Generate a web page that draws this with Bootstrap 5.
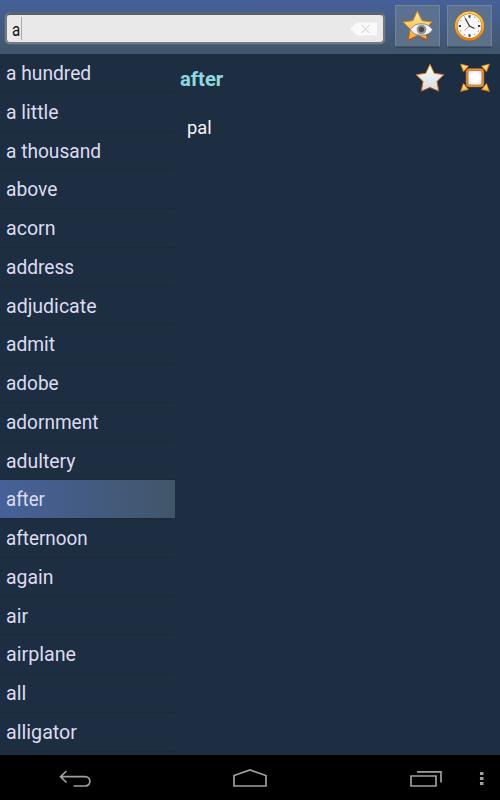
<!DOCTYPE html>
<html lang="en">
<head>
<meta charset="utf-8">
<meta name="viewport" content="width=device-width, initial-scale=1">
<title>Dictionary</title>
<link href="https://cdn.jsdelivr.net/npm/bootstrap@5.3.0/dist/css/bootstrap.min.css" rel="stylesheet">
<style>
body{font-family:Roboto,"Liberation Sans",sans-serif;background:#1d2d42;color:#dcdcf0;line-height:1}
.app{width:500px;height:800px}
.topbar{height:54px;padding:5px 8px 0 5px;background:linear-gradient(#46619a,#415669)}
.search{width:381px;height:31px;margin-top:8px;padding:0 5px 0 5px;background:#e9e9e9;border:2px solid #777b80;border-top-color:#5e6062;border-radius:5px;color:#111;font-size:18px;box-shadow:0 0 1px #a8a8a8}
.typed{width:8.5px;padding-top:2px}
.typed .fit{transform:scaleX(.84)}
.caret{width:1px;height:23px;background:#aaa}
.tool{width:45px;height:42px;background:linear-gradient(#5c7191,#5d7287);border:1px solid #71859c;border-bottom-color:#46586b;border-radius:1px;box-shadow:0 1px 1px #33455c}
.words{width:175px}
.word{height:38.76px;padding:2px 0 0 6px;border:0;border-bottom:1px solid #1f2835;border-radius:0;background:none;color:#dcdcf0;font-size:19.5px;text-align:left}
.word.current{background:linear-gradient(90deg,#46619a,#415669)}
.entry-title{font-size:20px;font-weight:700;color:#90d8df}
.entry-head{height:50px;padding:0 9px 0 5px}
.entry-head svg{margin-bottom:2px}
.meaning{padding:14px 0 0 12px;font-size:19px;color:#f5f5f8}
.sysbar{height:45px;background:#000}
svg{display:block;flex-shrink:0}
.fit{display:inline-block;transform-origin:0 50%}
</style>
<script src="https://cdn.jsdelivr.net/npm/bootstrap@5.3.0/dist/js/bootstrap.bundle.min.js"></script>
</head>
<body class="m-0 overflow-hidden">
<svg width="0" height="0" class="position-absolute" aria-hidden="true"><defs>
<linearGradient id="gold" x1="0" y1="0" x2="0" y2="1"><stop stop-color="#fff0a0"/><stop offset="1" stop-color="#f5a52b"/></linearGradient>
<linearGradient id="silver" x1="0" y1="0" x2="0" y2="1"><stop stop-color="#fff"/><stop offset=".5" stop-color="#e8e9ec"/><stop offset="1" stop-color="#d8dade"/></linearGradient>
<linearGradient id="rim" x1="0" y1="0" x2="0" y2="1"><stop stop-color="#ffd34d"/><stop offset="1" stop-color="#e68413"/></linearGradient>
<linearGradient id="edge" x1="0" y1="0" x2="0" y2="1"><stop stop-color="#e9982a"/><stop offset="1" stop-color="#a94b18"/></linearGradient>
<radialGradient id="glow"><stop offset=".5" stop-color="#fff"/><stop offset="1" stop-color="#dedee6"/></radialGradient>
</defs></svg>
<div class="app d-flex flex-column">
  <header class="topbar d-flex align-items-start flex-shrink-0">
    <div class="search d-flex align-items-center">
      <span class="typed"><span class="fit">a</span></span><span class="caret"></span>
      <svg class="ms-auto" width="28" height="14" viewBox="0 0 28 14"><path d="M0 7 7 .5H27V13.5H7Z" fill="#fafafa"/><path d="m11.500 3 8 8m0-8-8 8" stroke="#dedede" stroke-width="1.300"/></svg>
    </div>
    <button class="tool btn p-0 d-flex align-items-center justify-content-center" style="margin-left:10px" aria-label="Favourites">
      <svg width="34" height="34" viewBox="0 0 34 34"><path d="M16.300 2.500 21 11.700 31 13 24 20.300 26.600 31 17 26.500 7 31.200 9.200 20.300 2 13 12 11.700Z" fill="url(#gold)" stroke="url(#edge)" stroke-width="1" stroke-linejoin="round"/><path d="M9.500 20.500Q12.500 15 20 14.800T31.500 20.500Q29 26.200 20.500 26.200T9.500 20.500Z" fill="#f1f1f1" stroke="#77777d" stroke-width=".8"/><circle cx="20.500" cy="20.500" r="4.800" fill="#929498"/><circle cx="20.500" cy="20.500" r="2.700" fill="#4b4d50"/></svg>
    </button>
    <button class="tool btn p-0 d-flex align-items-center justify-content-center" style="margin-left:7px" aria-label="History">
      <svg width="34" height="34" viewBox="0 0 34 34"><circle cx="16.500" cy="17" r="13.500" fill="#f8f8f8" stroke="#b45b11" stroke-width="3"/><circle cx="16.500" cy="17" r="13.500" fill="none" stroke="url(#rim)" stroke-width="2.200"/><circle cx="16.500" cy="17" r="10.200" fill="none" stroke="#777" stroke-width="1.100" stroke-dasharray=".9 4.440" stroke-dashoffset=".45"/><path d="M16.500 6.200v2.500m0 16.500v2.500M5.800 17h2.200m17 0h2.200" stroke="#444" stroke-width="2"/><path d="m16.500 17-5 4.500" stroke="#f09890"/><path d="m12.200 9.200 4.300 7.800 5 2.500" fill="none" stroke="#333" stroke-width="1.200"/></svg>
    </button>
  </header>
  <main class="d-flex flex-grow-1 overflow-hidden">
    <nav class="words d-flex flex-column flex-shrink-0" id="words"></nav>
    <section class="flex-grow-1">
      <div class="entry-head d-flex align-items-center">
        <span class="entry-title fit" id="title">after</span>
        <svg class="ms-auto" width="30" height="30" viewBox="0 0 30 30"><path d="M15 1.500 19.200 10.300 28.700 11.700 22 18.500 23.800 28.300 15 24.500 6.200 28.300 8 18.500 1.300 11.700 10.800 10.300Z" fill="url(#silver)" stroke="url(#edge)" stroke-width="1" stroke-linejoin="round"/></svg>
        <svg style="margin-left:14px" width="32" height="32" viewBox="0 0 32 32"><g fill="url(#gold)" stroke="#c96c19" stroke-width=".7"><path d="M1.500 2 9.500 4 4.500 10Z"/><path d="M30.500 2 27.500 10 22.500 4Z"/><path d="M1.500 29.500 4.500 21.500 9.500 27.500Z"/><path d="M30.500 29.500 22.500 27.500 27.500 21.500Z"/></g><rect x="8" y="7.500" width="16" height="16.500" rx="2.500" fill="url(#glow)" stroke="#a9581c" stroke-width="2.600"/><rect x="8" y="7.500" width="16" height="16.500" rx="2.500" fill="none" stroke="#e79a38" stroke-width="1.300"/></svg>
      </div>
      <div class="meaning"><span class="fit" id="meaning">pal</span></div>
    </section>
  </main>
  <footer class="sysbar flex-shrink-0">
    <svg width="500" height="45" viewBox="0 0 500 45" fill="none" stroke="#a0a0a0" stroke-width="1.700"><path d="M66.500 16 60.500 21.700 66.500 27.500M61 21.700H85C91.500 21.700 91.500 31 85 31H73.500"/><path d="M234 31V20.500L250 15 266 20.500V31Z"/><path d="M411 21H436V31H411ZM417 16.800H441V27.500"/><path d="M481.700 17v3m0 2v3m0 2v3" stroke-width="3.500"/></svg>
  </footer>
</div>
<script>
// Each word carries the width its label occupies in the list.
const words=[["a hundred",84],["a little",52],["a thousand",94.5],["above",50.5],["acorn",48.5],["address",68],["adjudicate",89.500],["admit",48.500],["adobe",52],["adornment",92],["adultery",69],["after",38.500],["afternoon",81.500],["again",47],["air",21.500],["airplane",69],["all",19.500],["alligator",70]];
const list=document.getElementById("words");
function fit(el,w){el.style.transform=`scaleX(${w/el.offsetWidth})`}
for(const [text,width] of words){
  const item=document.createElement("button");
  item.className="word d-flex align-items-center flex-shrink-0 w-100"+(text==="after"?" current":"");
  const label=document.createElement("span");
  label.className="fit";label.textContent=text;
  item.append(label);list.append(item);fit(label,width+.7);
}
fit(document.getElementById("title"),43.500);
fit(document.getElementById("meaning"),25);
</script>
</body>
</html>
